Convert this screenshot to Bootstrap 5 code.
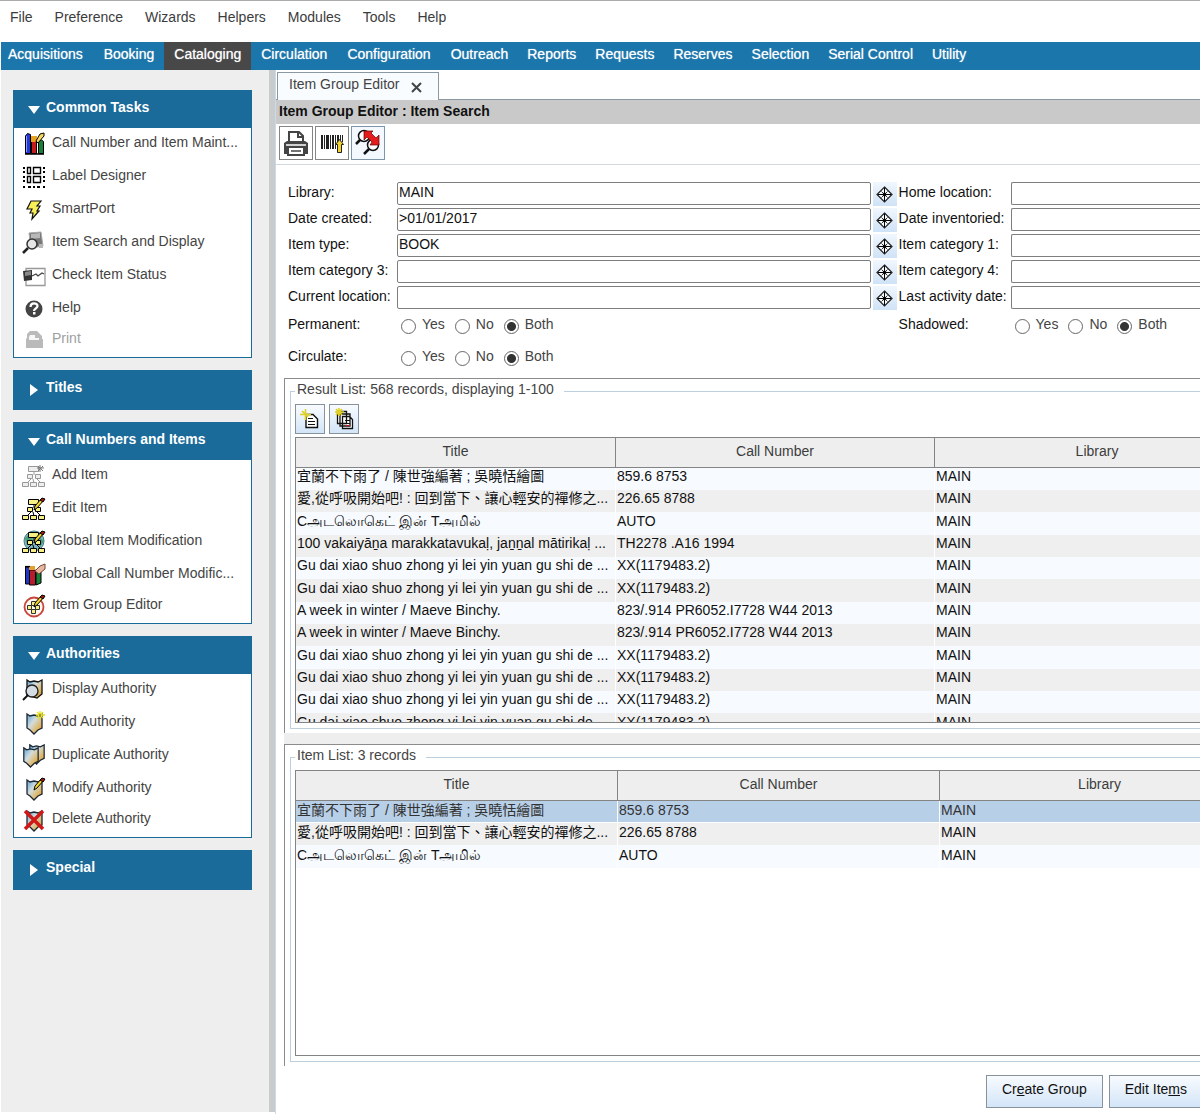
<!DOCTYPE html>
<html lang="en">
<head>
<meta charset="utf-8">
<meta name="viewport" content="width=device-width, initial-scale=1">
<title>Item Group Editor</title>
<link href="https://cdn.jsdelivr.net/npm/bootstrap@5.3.0/dist/css/bootstrap.min.css" rel="stylesheet">
<style>
body{font-family:"Liberation Sans",Arial,"Noto Sans CJK TC",sans-serif;font-size:14px;line-height:20px;color:#111;background:#fff;overflow:hidden}
a{color:inherit;text-decoration:none}
.app-menu{height:42px;border-top:1px solid #aaa;padding:6px 0 0 10px;gap:22px;color:#3c3c3c}
.module-bar{height:28px;background:#1a76ab;color:#fff;margin-left:1px}
.module-bar a{padding:2px 10px 6px 10px;white-space:nowrap;text-shadow:0 0 1px rgba(255,255,255,.7)}
.module-bar a:first-child{padding:2px 11px 6px 7px}
.module-bar a:nth-child(n+6){padding-right:9px}
.module-bar .current{background:#484848}
.side{flex:0 0 268px;margin:0 0 2px 1px;padding:20px 17px 0 12px;background:#eee;gap:12px}
.splitter{flex:0 0 6px;background:#c9cbcd;margin-bottom:2px}
.panel-head{display:flex;width:100%;height:40px;padding:7px 0 0 14px;border:0;background:#1a6b9a;color:#fff;font-weight:bold;text-align:left;gap:6px}
.panel-head svg{width:13px;height:13px;margin-top:6px;fill:#fff}
.open-panel .panel-head{height:38px}
.task-list{border:1px solid #1a6b9a;border-top:0;background:#fff}
.task-list a{display:flex;height:33px;padding:4px 0 0 8px;gap:6px;color:#444;white-space:nowrap}
.task-list li:last-child a{height:31px;padding-top:2px}
.task-list svg{width:24px;height:24px;flex:none}
.task-list .off{color:#a0a0a0}
.task-list .off svg{opacity:.5}
.wk{border-left:1px solid #c5dcea}
.tab-strip{height:30px;padding-top:2px;border-bottom:1px solid #8a98a4;padding-left:1px}
.tab-item{height:28px;padding:1px 16px 0 11px;border:1px solid #8a98a4;border-bottom:0;background:#f8fcff;color:#444;gap:11px}
.tab-item button{border:0;background:none;padding:7px 0 0;line-height:1;height:20px}
.title-strip{height:24px;background:#c9c9c9;padding:1px 0 0 3px;font-weight:bold;font-size:14px}
.tool-strip{height:41px;padding:2px 0 0 3px;border-bottom:1px solid #d3d9de;gap:2px}
.tool-strip button{width:34px;height:34px;padding:0;border:1px solid #858585;background:#fff}
.tool-strip button:last-child{border-color:#7d96ac;background:#f3f9ff}
.tool-strip svg{width:32px;height:32px;display:block}
.crit{display:grid;grid-template-columns:109px 5fr 28px 112px 2fr;padding:17px 0 2px 12px}
.crit>*{height:26px;white-space:nowrap}
.crit input.box{height:23px;border:1px solid #7e7e7e;border-radius:2px;padding:0 0 4px 1px;width:100%;outline:0;color:#111}
.crit input.edge{border-right:0;border-radius:2px 0 0 2px}
.crit .pick{height:24px;width:24px;margin-left:2px;border:0;padding:0;background:linear-gradient(#f1f7fe,#cfe2f7)}
.pick svg{width:22px;height:24px;display:block}
.crit .tall{height:32px;padding-top:2px}
.opts{display:flex;gap:10px;padding-left:4px;grid-column:span 2;color:#444}
.opts.narrow{grid-column:span 1}
.opts label{display:flex;gap:6px}
.opts input{appearance:none;width:15px;height:15px;margin:5px 0 0;border:1px solid #666;border-radius:50%;background:#fff}
.opts input:checked{background:radial-gradient(circle,#333 0 4px,#fff 5px)}
.list-frame{margin-left:8px;border:1px solid #8c8c8c;border-right:0;border-bottom:0;padding:0 0 4px 5px}
.list-set{position:relative;margin-top:12px;border:1px solid #bcd0e0;border-right:0;padding:12px 0 5px 4px;min-width:0}
.list-set h2{position:absolute;top:-13px;left:4px;margin:0;padding:0 10px 0 2px;background:#fff;font-size:14px;line-height:20px;font-weight:normal;color:#444}
.list-tools{gap:4px;margin-bottom:3px}
.list-tools button,.cmd{border:1px solid #87929d;background:linear-gradient(#f8fbff,#d3e5f8)}
.list-tools button{width:30px;height:30px;padding:0}
.list-tools svg{width:28px;height:28px;display:block}
.grid-box{border:1px solid #848484;border-right:0;overflow:hidden}
.results{height:286px}
.data-grid{table-layout:fixed;border-collapse:separate;border-spacing:0;width:calc(100% + 60px)}
.data-grid th{height:30px;padding:0 0 3px;background:#eee;border-right:1px solid #848484;border-bottom:1px solid #848484;font-weight:normal;text-align:center;color:#3c3c3c}
.data-grid td{height:22px;padding:0 0 4px 1px;line-height:18px;white-space:nowrap;overflow:hidden;background:#f7fbff;border-right:1px solid #fff}
.results .data-grid td{line-height:16px;padding-bottom:6px}
.data-grid tr:nth-child(3n) td{height:23px}
.data-grid tr:nth-child(even) td{background:#efefef}
.data-grid tr.picked td{background:#b8cfe8;color:#333;border-bottom:1px solid #fff;padding-bottom:3px}
.gap-band{height:11px;margin-left:8px;background:#eee}
.cmd{height:33px;padding:0 15px 5px;white-space:nowrap;color:#111}
.cmds{gap:6px;padding:9px 0 6px;margin-right:-3px}
</style>
<script src="https://cdn.jsdelivr.net/npm/bootstrap@5.3.0/dist/js/bootstrap.bundle.min.js"></script>
</head>
<body>
<svg width="0" height="0" class="position-absolute" aria-hidden="true">
<defs>
<linearGradient id="gold" x1="0" y1="0" x2="1" y2="1"><stop offset="0" stop-color="#5fa3d8"/><stop offset=".4" stop-color="#d3dcdc"/><stop offset=".75" stop-color="#dfb35b"/><stop offset="1" stop-color="#a8792c"/></linearGradient>
<symbol id="books" viewBox="0 0 24 24"><path fill="#2238d8" stroke="#000" d="M3.500 4l2-2.500 3 1v19h-5z"/><path fill="#c41c1c" stroke="#000" d="M9.500 6.500h5v15h-5z"/><path fill="#168038" stroke="#000" d="M16.500 9l3-1 2 1.500v12h-5z"/><path fill="#e8a020" d="M9 4h6v4l-2 2H9z"/><path fill="#f5d860" stroke="#000" d="M14 9l4-7 4-1v3l-6 7z"/><path fill="#fff" d="M4 4h1v16H4z" opacity=".5"/><path d="M3 22h19" stroke="#000" stroke-width="1.500"/></symbol>
<symbol id="labels" viewBox="0 0 24 24"><path d="M1 2h2v2H1zM1 6h2v2H1zM21 2h2v2h-2zM21 6h2v2h-2zM1 11h2v2H1zM1 15h2v2H1zM21 11h2v2h-2zM21 15h2v2h-2zM1 21h2v2H1zM6 21h3v2H6zM11 21h2v2h-2zM15 21h3v2h-3zM21 21h2v2h-2z"/><path fill="#fff" stroke="#000" stroke-width="1.400" d="M5.500 2.500h3v6h-3zM11.500 2.500h7v6h-7zM5.500 11.500h3v6h-3zM11.500 11.500h7v6h-7z"/></symbol>
<symbol id="bolt" viewBox="0 0 24 24"><path fill="#f8ee58" stroke="#111" stroke-width="1.200" d="M9 3h10l-4 5h3l-3 5h2l-7 8 1-6H8l2-4H5z"/></symbol>
<symbol id="find" viewBox="0 0 24 24"><path fill="#777" stroke="#aaa" d="M7 2l12-1 2 14-12 2z"/><path fill="#b8b8b8" d="M9 3l9-1v5l-9 1zM17 13h4v4h-4z"/><circle cx="10" cy="13" r="5" fill="#e6e6e6" stroke="#333" stroke-width="1.500"/><path stroke="#222" stroke-width="2.500" d="M6 17l-5 5"/></symbol>
<symbol id="status" viewBox="0 0 24 24"><path fill="#fff" stroke="#999" stroke-width="1.300" d="M4 4.500h19v17H4z"/><path fill="#333" d="M1 7l9-1v10l-8 1z"/><path fill="#888" d="M3 8l6-1v4l-6 1z"/><path fill="none" stroke="#444" stroke-width="1.300" d="M10 12l4-2 2 2 4-3 2 1"/></symbol>
<symbol id="help" viewBox="0 0 24 24"><circle cx="12" cy="12" r="8.500" fill="#444"/><path fill="none" stroke="#fff" stroke-width="2.200" d="M8.500 10c0-5 7-4.500 7-1 0 2.500-3.500 2.500-3.500 5"/><path fill="#fff" d="M11 15h2.500v2.500H11z"/></symbol>
<symbol id="printoff" viewBox="0 0 24 24"><path fill="#777" d="M5 6l3-3h7l5 5v3h1v9H4v-9l1-1z"/><path fill="#eee" d="M8 7h5v3h4v2H7V9z"/></symbol>
<symbol id="tree" viewBox="0 0 24 24"><path fill="none" stroke="currentColor" d="M12 8v3M9 15l-4 4M15 15l4 4M11 15l1 4"/><g fill="var(--leaf)" stroke="currentColor"><path d="M6.500 2.500h10v5h-10zM5.500 10.500h5v4h-5zM13.500 10.500h5v4h-5zM.5 18.500h6v4h-6zM8.500 18.500h6v4h-6zM16.500 18.500h6v4h-6z"/></g></symbol>
<symbol id="pencil" viewBox="0 0 24 24"><path fill="#f4d52c" stroke="#000" d="M12 13l1-4 6-7 3 1-7 8z"/><path fill="#a01c10" stroke="#000" d="M18 3l2-2 3 1-2 3z"/></symbol>
<symbol id="addtree" viewBox="0 0 24 24"><g style="color:#999;--leaf:#eee"><use href="#tree"/></g><path d="M18 1v7M15 4h7M16 2l5 5M21 2l-5 5" stroke="#777"/></symbol>
<symbol id="edittree" viewBox="0 0 24 24"><g style="color:#000;--leaf:#f5ef86"><use href="#tree"/></g><use href="#pencil"/></symbol>
<symbol id="globtree" viewBox="0 0 24 24"><circle cx="12" cy="11" r="10" fill="#7cb7c0" stroke="#487c88"/><path fill="#4c9d78" d="M3 8l6-5 2 6-6 6zM17 7l5 4-4 6z"/><g style="color:#000;--leaf:#f5ef86"><use href="#tree"/></g><use href="#pencil"/></symbol>
<symbol id="callmod" viewBox="0 0 24 24"><path fill="#2436c8" stroke="#000" d="M3.500 4h4v17h-4z"/><path fill="#b81c2c" stroke="#000" d="M7.500 7h6v15h-6z"/><path fill="#168038" stroke="#000" d="M14 9h5v11l-5 2z"/><path fill="#e3a030" d="M7 3h6v4H7z"/><path fill="#e7b7a0" stroke="#764638" d="M13 8l5-5 5-2v5l-6 5z"/><path d="M3 3.500h5" stroke="#000" stroke-width="1.200"/></symbol>
<symbol id="group" viewBox="0 0 24 24"><circle cx="12" cy="13" r="9.500" fill="#fff8ee" stroke="#c7433b" stroke-width="1.800"/><path fill="#f5ef86" stroke="#333" d="M9.500 7.500h4v4h-4zM5.500 11.500h4v4h-4zM13.500 11.500h4v4h-4zM9.500 15.500h4v4h-4z"/><use href="#pencil"/></symbol>
<symbol id="shield" viewBox="0 0 24 24"><path fill="url(#gold)" stroke="#1b2733" stroke-width="1.300" d="M5 3l3 2 4-1 4 1 4-2v14l-4 2-4 4-4-4-3-2z"/></symbol>
<symbol id="shieldfind" viewBox="0 0 24 24"><path fill="url(#gold)" stroke="#111" stroke-width="1.300" d="M5 2l3 2 4-1 4 1 4-2v14l-5 4-10-3z"/><circle cx="10" cy="13" r="6" fill="#d6dce4" stroke="#222" stroke-width="1.400"/><path stroke="#111" stroke-width="2" d="M6 17l-5 5"/></symbol>
<symbol id="shieldadd" viewBox="0 0 24 24"><use href="#shield"/><path d="M18 0v9M14 4h9M15 1l6 6M21 1l-6 6" stroke="#e6e021" stroke-width="1.300"/><path stroke="#555" d="M18 3v3"/></symbol>
<symbol id="shielddup" viewBox="0 0 24 24"><use href="#shield" x="3" y="-2" width="23" height="23"/><use href="#shield" x="-3" y="1" width="23" height="23"/></symbol>
<symbol id="shieldmod" viewBox="0 0 24 24"><use href="#shield"/><use href="#pencil"/></symbol>
<symbol id="shielddel" viewBox="0 0 24 24"><use href="#shield"/><path stroke="#d01818" stroke-width="3.500" d="M3 3l18 18M21 3L3 21"/></symbol>
<symbol id="down" viewBox="0 0 13 13"><path d="M1 3h12L7 11z"/></symbol>
<symbol id="right" viewBox="0 0 13 13"><path d="M3 1v12l8-6z"/></symbol>
<symbol id="wheel" viewBox="0 0 22 24"><path fill="#f9fcff" stroke="#222" stroke-width="1.200" d="M11.500 5l7.500 7.500-7.500 7.500L4 12.500z"/><path stroke="#000" d="M11.500 6v13M5 12.500h13"/><path stroke="#333" d="M8.500 9.500l6 6M14.500 9.500l-6 6"/><path fill="#000" d="M11.500 9l1 2.500 2.500 1-2.500 1-1 2.500-1-2.500-2.500-1 2.500-1z"/></symbol>
</defs>
</svg>
<div class="min-vh-100 d-flex flex-column">
<nav class="app-menu d-flex" aria-label="Menu"><a href="#">File</a><a href="#">Preference</a><a href="#">Wizards</a><a href="#">Helpers</a><a href="#">Modules</a><a href="#">Tools</a><a href="#">Help</a></nav>
<nav class="module-bar d-flex" aria-label="Modules"><a href="#">Acquisitions</a><a href="#">Booking</a><a href="#" class="current">Cataloging</a><a href="#">Circulation</a><a href="#">Configuration</a><a href="#">Outreach</a><a href="#">Reports</a><a href="#">Requests</a><a href="#">Reserves</a><a href="#">Selection</a><a href="#">Serial Control</a><a href="#">Utility</a></nav>
<div class="d-flex flex-grow-1">
<aside class="side d-flex flex-column">
<section class="open-panel"><button class="panel-head"><svg><use href="#down"/></svg>Common Tasks</button>
<ul class="task-list list-unstyled mb-0">
<li><a href="#"><svg><use href="#books"/></svg>Call Number and Item Maint...</a></li>
<li><a href="#"><svg><use href="#labels"/></svg>Label Designer</a></li>
<li><a href="#"><svg><use href="#bolt"/></svg>SmartPort</a></li>
<li><a href="#"><svg><use href="#find"/></svg>Item Search and Display</a></li>
<li><a href="#"><svg><use href="#status"/></svg>Check Item Status</a></li>
<li><a href="#"><svg><use href="#help"/></svg>Help</a></li>
<li><a href="#" class="off"><svg><use href="#printoff"/></svg>Print</a></li>
</ul></section>
<section><button class="panel-head"><svg><use href="#right"/></svg>Titles</button></section>
<section class="open-panel"><button class="panel-head"><svg><use href="#down"/></svg>Call Numbers and Items</button>
<ul class="task-list list-unstyled mb-0">
<li><a href="#"><svg><use href="#addtree"/></svg>Add Item</a></li>
<li><a href="#"><svg><use href="#edittree"/></svg>Edit Item</a></li>
<li><a href="#"><svg><use href="#globtree"/></svg>Global Item Modification</a></li>
<li><a href="#"><svg><use href="#callmod"/></svg>Global Call Number Modific...</a></li>
<li><a href="#"><svg><use href="#group"/></svg>Item Group Editor</a></li>
</ul></section>
<section class="open-panel"><button class="panel-head"><svg><use href="#down"/></svg>Authorities</button>
<ul class="task-list list-unstyled mb-0">
<li><a href="#"><svg><use href="#shieldfind"/></svg>Display Authority</a></li>
<li><a href="#"><svg><use href="#shieldadd"/></svg>Add Authority</a></li>
<li><a href="#"><svg><use href="#shielddup"/></svg>Duplicate Authority</a></li>
<li><a href="#"><svg><use href="#shieldmod"/></svg>Modify Authority</a></li>
<li><a href="#"><svg><use href="#shielddel"/></svg>Delete Authority</a></li>
</ul></section>
<section><button class="panel-head"><svg><use href="#right"/></svg>Special</button></section>
</aside>
<div class="splitter"></div>
<main class="wk flex-fill d-flex flex-column overflow-hidden">
<div class="tab-strip d-flex"><div class="tab-item d-flex">Item Group Editor<button aria-label="Close tab"><svg width="11" height="12" viewBox="0 0 11 12" class="d-block"><path d="M1 1l9 9M10 1l-9 9" stroke="#444" stroke-width="2"/></svg></button></div></div>
<div class="title-strip">Item Group Editor : Item Search</div>
<div class="tool-strip d-flex">
<button aria-label="Print"><svg viewBox="0 0 32 32"><path fill="#fff" stroke="#444" stroke-width="2" d="M9 14V5h10l4 4v5"/><path fill="none" stroke="#444" stroke-width="2" d="M18 5v5h5"/><path fill="#444" d="M4 16l3-2h18l3 2v11H4z"/><path fill="#fff" stroke="#444" stroke-width="2" d="M8 20h16v8H8z"/><path stroke="#444" stroke-width="1.500" d="M11 24h10"/><path stroke="#fff" stroke-width="1.500" d="M6 18h20"/></svg></button>
<button aria-label="Scan barcode"><svg viewBox="0 0 32 32"><path fill="#222" d="M5 8h2v14H5zM8 8h1v14H8zM10 8h3v14h-3zM14 8h1v14h-1zM16 8h2v14h-2zM19 8h1v14h-1zM21 8h2v14h-2zM24 8h1v6h-1zM26 8h1v7h-1z"/><path fill="#f4d42c" stroke="#222" d="M23.500 12.500l4 5h-2v8h-4v-8h-2z"/></svg></button>
<button aria-label="Search again"><svg viewBox="0 0 32 32"><circle cx="12" cy="9" r="5.500" fill="#fff" stroke="#111" stroke-width="1.500"/><path stroke="#111" stroke-width="2.500" d="M8 13l-4 4M17 22l-5 5"/><circle cx="21" cy="18" r="5.500" fill="#fff" stroke="#111" stroke-width="1.500"/><path fill="#e31c1c" stroke="#600" stroke-width=".7" d="M12 4h9l-2 2 5 5 3-3v10h-9l2-3-5-5-3 3z"/></svg></button>
</div>
<form class="crit">
<label for="lib">Library:</label><input class="box" id="lib" value="MAIN"><button type="button" class="pick" aria-label="Choose library"><svg><use href="#wheel"/></svg></button><label for="home">Home location:</label><input class="box edge" id="home">
<label for="made">Date created:</label><input class="box" id="made" value="&gt;01/01/2017"><button type="button" class="pick" aria-label="Choose date"><svg><use href="#wheel"/></svg></button><label for="inv">Date inventoried:</label><input class="box edge" id="inv">
<label for="kind">Item type:</label><input class="box" id="kind" value="BOOK"><button type="button" class="pick" aria-label="Choose type"><svg><use href="#wheel"/></svg></button><label for="cat1">Item category 1:</label><input class="box edge" id="cat1">
<label for="cat3">Item category 3:</label><input class="box" id="cat3"><button type="button" class="pick" aria-label="Choose category"><svg><use href="#wheel"/></svg></button><label for="cat4">Item category 4:</label><input class="box edge" id="cat4">
<label for="loc">Current location:</label><input class="box" id="loc"><button type="button" class="pick" aria-label="Choose location"><svg><use href="#wheel"/></svg></button><label for="last">Last activity date:</label><input class="box edge" id="last">
<span class="tall" id="perm">Permanent:</span><div class="opts tall" role="radiogroup" aria-labelledby="perm"><label><input type="radio" name="perm">Yes</label><label><input type="radio" name="perm">No</label><label><input type="radio" name="perm" checked>Both</label></div>
<span class="tall" id="shad">Shadowed:</span><div class="opts narrow tall" role="radiogroup" aria-labelledby="shad"><label><input type="radio" name="shad">Yes</label><label><input type="radio" name="shad">No</label><label><input type="radio" name="shad" checked>Both</label></div>
<span class="tall" id="circ">Circulate:</span><div class="opts tall" role="radiogroup" aria-labelledby="circ"><label><input type="radio" name="circ">Yes</label><label><input type="radio" name="circ">No</label><label><input type="radio" name="circ" checked>Both</label></div>
</form>
<section class="list-frame"><div class="list-set"><h2>Result List: 568 records, displaying 1-100</h2>
<div class="list-tools d-flex">
<button aria-label="Add item"><svg viewBox="0 0 28 28"><path fill="#fff" stroke="#111" stroke-width="1.400" d="M10 9.500h7l4.500 4.500v8.500H10z"/><path stroke="#111" d="M12 13.500h5M12 16.500h7M12 19.500h7"/><path stroke="#e0d020" stroke-width="1.600" d="M9.500 4v11M4 9.500h11M6 6l6 6"/></svg></button>
<button aria-label="Add all items"><svg viewBox="0 0 28 28"><path fill="#fff" stroke="#111" stroke-width="1.300" d="M7.500 6.500h9v12h-9zM10 9h10v12H10zM12.500 11.500h7l3 3v9h-10z"/><path stroke="#111" d="M15 15.500h5M15 18.500h5"/><path stroke="#b02020" d="M15 20.500h5"/><path stroke="#e0d020" stroke-width="1.600" d="M9 3v8M5 7h9M6 4l6 6M12 4l-6 6"/></svg></button>
</div>
<div class="grid-box results"><table class="data-grid"><colgroup><col style="width:320px"><col style="width:319px"><col></colgroup>
<thead><tr><th>Title</th><th>Call Number</th><th>Library</th></tr></thead>
<tbody>
<tr><td>宜蘭不下雨了 / 陳世強編著 ; 吳曉恬繪圖</td><td>859.6 8753</td><td>MAIN</td></tr>
<tr><td>愛,從呼吸開始吧! : 回到當下、讓心輕安的禪修之...</td><td>226.65 8788</td><td>MAIN</td></tr>
<tr><td>Cஅடலொகெட் இன் Tஅமில்</td><td>AUTO</td><td>MAIN</td></tr>
<tr><td>100 vakaiyāṉa marakkatavukaḷ, jaṉṉal mātirikaḷ ...</td><td>TH2278 .A16 1994</td><td>MAIN</td></tr>
<tr><td>Gu dai xiao shuo zhong yi lei yin yuan gu shi de ...</td><td>XX(1179483.2)</td><td>MAIN</td></tr>
<tr><td>Gu dai xiao shuo zhong yi lei yin yuan gu shi de ...</td><td>XX(1179483.2)</td><td>MAIN</td></tr>
<tr><td>A week in winter / Maeve Binchy.</td><td>823/.914 PR6052.I7728 W44 2013</td><td>MAIN</td></tr>
<tr><td>A week in winter / Maeve Binchy.</td><td>823/.914 PR6052.I7728 W44 2013</td><td>MAIN</td></tr>
<tr><td>Gu dai xiao shuo zhong yi lei yin yuan gu shi de ...</td><td>XX(1179483.2)</td><td>MAIN</td></tr>
<tr><td>Gu dai xiao shuo zhong yi lei yin yuan gu shi de ...</td><td>XX(1179483.2)</td><td>MAIN</td></tr>
<tr><td>Gu dai xiao shuo zhong yi lei yin yuan gu shi de ...</td><td>XX(1179483.2)</td><td>MAIN</td></tr>
<tr><td>Gu dai xiao shuo zhong yi lei yin yuan gu shi de ...</td><td>XX(1179483.2)</td><td>MAIN</td></tr>
</tbody></table></div>
</div></section>
<div class="gap-band"></div>
<section class="list-frame flex-grow-1 d-flex flex-column"><div class="list-set flex-grow-1 d-flex flex-column"><h2>Item List: 3 records</h2>
<div class="grid-box flex-grow-1"><table class="data-grid"><colgroup><col style="width:322px"><col style="width:322px"><col></colgroup>
<thead><tr><th>Title</th><th>Call Number</th><th>Library</th></tr></thead>
<tbody>
<tr class="picked"><td>宜蘭不下雨了 / 陳世強編著 ; 吳曉恬繪圖</td><td>859.6 8753</td><td>MAIN</td></tr>
<tr><td>愛,從呼吸開始吧! : 回到當下、讓心輕安的禪修之...</td><td>226.65 8788</td><td>MAIN</td></tr>
<tr><td>Cஅடலொகெட் இன் Tஅமில்</td><td>AUTO</td><td>MAIN</td></tr>
</tbody></table></div>
</div></section>
<div class="cmds d-flex justify-content-end"><button class="cmd">Cr<u>e</u>ate Group</button><button class="cmd">Edit Ite<u>m</u>s</button></div>
</main>
</div>
</div>
</body>
</html>
